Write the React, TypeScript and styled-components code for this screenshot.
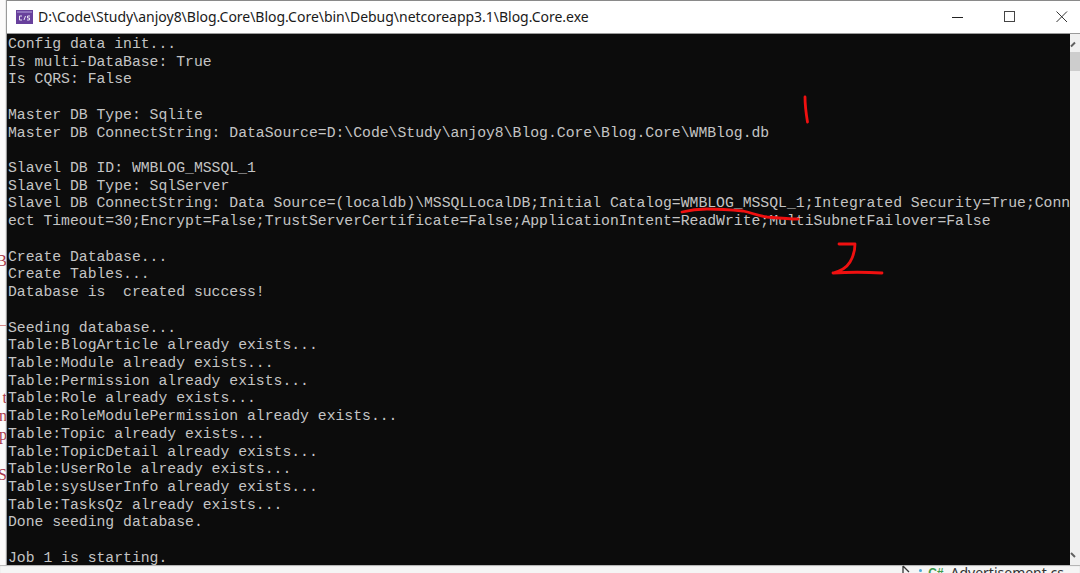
import styled, { createGlobalStyle } from 'styled-components';

const CONSOLE_BG = '#0c0c0c';
const CONSOLE_TEXT = '#c4c4c4';
const RED = '#f01010';

const LINES = [
  'Config data init...',
  'Is multi-DataBase: True',
  'Is CQRS: False',
  '',
  'Master DB Type: Sqlite',
  'Master DB ConnectString: DataSource=D:\\Code\\Study\\anjoy8\\Blog.Core\\Blog.Core\\WMBlog.db',
  '',
  'Slavel DB ID: WMBLOG_MSSQL_1',
  'Slavel DB Type: SqlServer',
  'Slavel DB ConnectString: Data Source=(localdb)\\MSSQLLocalDB;Initial Catalog=WMBLOG_MSSQL_1;Integrated Security=True;Conn',
  'ect Timeout=30;Encrypt=False;TrustServerCertificate=False;ApplicationIntent=ReadWrite;MultiSubnetFailover=False',
  '',
  'Create Database...',
  'Create Tables...',
  'Database is  created success!',
  '',
  'Seeding database...',
  'Table:BlogArticle already exists...',
  'Table:Module already exists...',
  'Table:Permission already exists...',
  'Table:Role already exists...',
  'Table:RoleModulePermission already exists...',
  'Table:Topic already exists...',
  'Table:TopicDetail already exists...',
  'Table:UserRole already exists...',
  'Table:sysUserInfo already exists...',
  'Table:TasksQz already exists...',
  'Done seeding database.',
  '',
  'Job 1 is starting.',
];

const GUTTER_MARKS = [
  { text: 'B', top: 252 },
  { text: 't', top: 389 },
  { text: 'n', top: 407 },
  { text: 'p', top: 426 },
  { text: 'S', top: 466 },
];

const GlobalStyle = createGlobalStyle`
  html, body {
    margin: 0;
    padding: 0;
    background: #f4f4f4;
    overflow: hidden;
  }
`;

const Page = styled.div`
  position: relative;
  width: 1080px;
  height: 573px;
  overflow: hidden;
  display: flex;
  flex-direction: column;
  background: #f4f4f4;
`;

const Main = styled.div`
  display: flex;
  height: 565px;
  flex: none;
`;

const Gutter = styled.div`
  position: relative;
  width: 7px;
  flex: none;
  background: #fbfafa;
  overflow: hidden;
`;

const GutterMark = styled.span<{ $top: number }>`
  position: absolute;
  top: ${(p) => p.$top}px;
  right: 0;
  font: 16px/17px 'Liberation Serif', serif;
  color: #a8384a;
`;

const GutterLine = styled.div`
  position: absolute;
  top: 325px;
  left: 0;
  width: 7px;
  height: 1px;
  background: #d98a8a;
`;

const Window = styled.div`
  flex: 1;
  min-width: 0;
  display: flex;
  flex-direction: column;
  border-top: 1px solid #8a8a8a;
  box-shadow: -1px 0 1px #9a9a9a;
  position: relative;
`;

const TitleBar = styled.div`
  height: 32px;
  flex: none;
  display: flex;
  align-items: center;
  padding-left: 9px;
  gap: 5px;
  background: #fff;
  border-bottom: 1px solid #9a9a9a;
`;

const AppIcon = styled.svg`
  width: 17px;
  height: 14px;
  flex: none;
`;

const Title = styled.span`
  flex: 1;
  font: 14px/18px 'Noto Sans', 'Open Sans', sans-serif;
  letter-spacing: -0.02px;
  color: #1a1a1a;
  white-space: nowrap;
`;

const WindowControls = styled.div`
  display: flex;
  height: 100%;
  margin-right: -8px;
`;

const ControlButton = styled.button`
  width: 52px;
  height: 100%;
  padding: 0;
  border: 0;
  background: transparent;
  display: flex;
  align-items: center;
  justify-content: center;
  svg {
    display: block;
  }
`;

const Body = styled.div`
  flex: 1;
  min-height: 0;
  display: flex;
`;

const Console = styled.div`
  flex: 1;
  min-width: 0;
  background: ${CONSOLE_BG};
  padding: 2px 0 0 1px;
  overflow: hidden;
`;

const ConsoleLine = styled.div`
  height: 17.72px;
  font: 14.75px/17.72px 'Liberation Mono', monospace;
  color: ${CONSOLE_TEXT};
  white-space: pre;
`;

const ScrollBar = styled.div`
  width: 10px;
  flex: none;
  background: #f0f0f0;
  display: flex;
  flex-direction: column;
  justify-content: space-between;
  overflow: hidden;
`;

const ScrollTop = styled.div`
  display: flex;
  flex-direction: column;
`;

const ScrollArrow = styled.svg`
  width: 10px;
  height: 18px;
  display: block;
`;

const ScrollThumb = styled.div`
  height: 19px;
  background: #cdcdcd;
`;

const BottomStrip = styled.div`
  flex: 1;
  display: flex;
  align-items: flex-start;
  justify-content: flex-end;
  padding-right: 16px;
  background: #f5f5f5;
  box-shadow: inset 0 1px 1px #b5b5b5;
  overflow: hidden;
`;

const CursorIcon = styled.svg`
  width: 8px;
  height: 8px;
  flex: none;
  margin-right: 9px;
`;

const FileDot = styled.span`
  width: 3px;
  height: 3px;
  margin: 4px 6px 0 0;
  border-radius: 50%;
  background: #4aa8d8;
  flex: none;
`;

const FileIcon = styled.span`
  font: bold 12px/14px 'Liberation Sans', sans-serif;
  color: #3c9a4a;
  margin: 1px 7px 0 0;
`;

const FileName = styled.span`
  font: 14px/14px 'Noto Sans', sans-serif;
  color: #333;
  margin-top: 1px;
`;

const Annotations = styled.svg`
  position: absolute;
  left: 0;
  top: 0;
  width: 1080px;
  height: 573px;
  pointer-events: none;
`;

export default function App() {
  return (
    <Page>
      <GlobalStyle />
      <Main>
        <Gutter>
          {GUTTER_MARKS.map((m) => (
            <GutterMark key={m.text} $top={m.top}>
              {m.text}
            </GutterMark>
          ))}
          <GutterLine />
        </Gutter>
        <Window>
          <TitleBar>
            <AppIcon viewBox="0 0 17 14">
              <rect width="17" height="14" fill="#68409c" />
              <rect x="1" y="1" width="15" height="2" fill="#8f72bd" />
              <path d="M6 6H3.500v4H6M8 10l1.500-4M14 6h-2.500v2h2v2H11" fill="none" stroke="#e8e2f2" strokeWidth="1" />
            </AppIcon>
            <Title>D:\Code\Study\anjoy8\Blog.Core\Blog.Core\bin\Debug\netcoreapp3.1\Blog.Core.exe</Title>
            <WindowControls>
              <ControlButton aria-label="minimize">
                <svg width="12" height="12" viewBox="0 0 12 12">
                  <path d="M0 6.500h11" stroke="#222" strokeWidth="1" />
                </svg>
              </ControlButton>
              <ControlButton aria-label="maximize">
                <svg width="12" height="12" viewBox="0 0 12 12">
                  <rect x="0.500" y="0.500" width="10" height="10" fill="none" stroke="#444" strokeWidth="1" />
                </svg>
              </ControlButton>
              <ControlButton aria-label="close">
                <svg width="12" height="12" viewBox="0 0 12 12">
                  <path d="M0.500 0.500l10.500 10.500M11 0.500L0.500 11" stroke="#333" strokeWidth="1" />
                </svg>
              </ControlButton>
            </WindowControls>
          </TitleBar>
          <Body>
            <Console>
              {LINES.map((line, i) => (
                <ConsoleLine key={i}>{line}</ConsoleLine>
              ))}
            </Console>
            <ScrollBar>
              <ScrollTop>
                <ScrollArrow viewBox="0 0 10 18">
                  <path d="M1 12.500L5 8.500" stroke="#606060" strokeWidth="2" fill="none" />
                </ScrollArrow>
                <ScrollThumb />
              </ScrollTop>
              <ScrollArrow viewBox="0 0 10 18">
                <path d="M1 6l4 4" stroke="#606060" strokeWidth="2" fill="none" />
              </ScrollArrow>
            </ScrollBar>
          </Body>
        </Window>
      </Main>
      <BottomStrip>
        <CursorIcon viewBox="0 0 8 8">
          <path d="M1 1v7M1 1l6 6" stroke="#333" strokeWidth="1.300" fill="none" />
        </CursorIcon>
        <FileDot />
        <FileIcon>C#</FileIcon>
        <FileName>Advertisement.cs</FileName>
      </BottomStrip>
      <Annotations viewBox="0 0 1080 573">
        <g fill="none" stroke={RED} strokeWidth="2.800" strokeLinecap="round" strokeLinejoin="round">
          <path d="M805 97c0 8 1 16 2.500 25" />
          <path d="M682 212c8-2 16-3 25-3c14 0 26 1 36 2c9 2 16 5 24 6c11 1 21 2 31 2" />
          <path d="M839 244h16c0 7-2 13-5 18c-3 5-9 9-17 11M833 273c16-1 32-1 49 0" />
        </g>
      </Annotations>
    </Page>
  );
}
